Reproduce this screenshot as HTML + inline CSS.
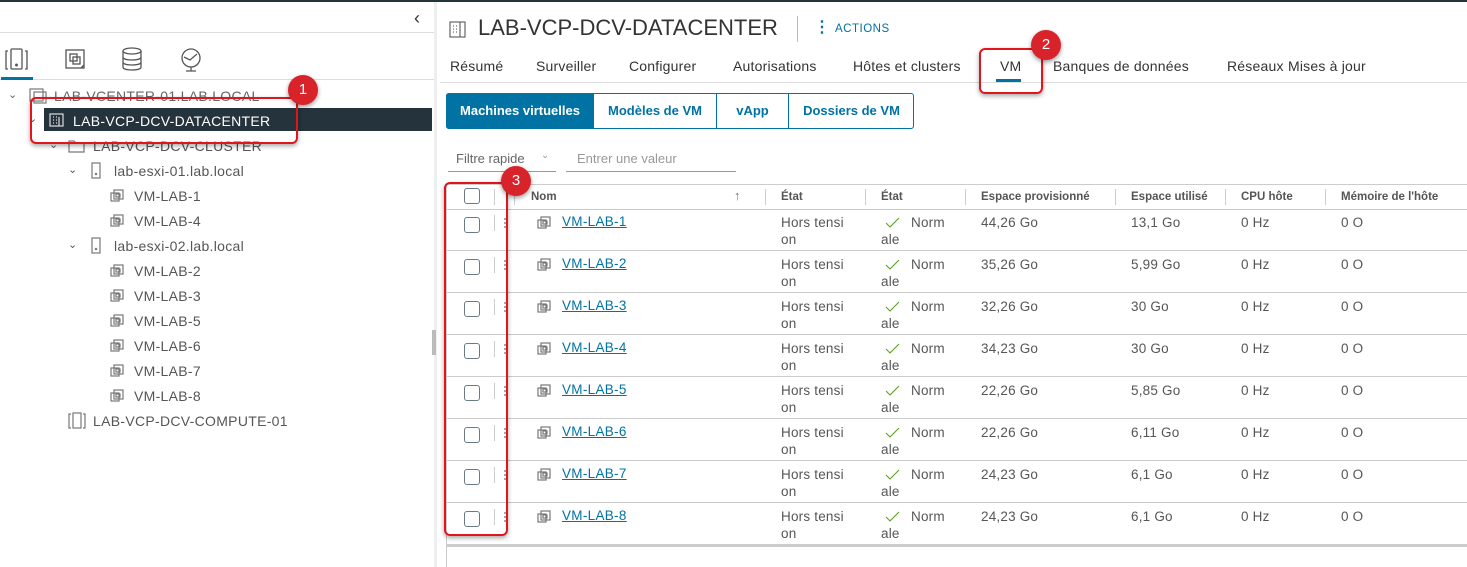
<!DOCTYPE html>
<html><head><meta charset="utf-8"><style>
*{margin:0;padding:0;box-sizing:border-box}
body{width:1467px;height:567px;overflow:hidden;background:#fff;font-family:"Liberation Sans",sans-serif;color:#565656;position:relative}
.a{position:absolute;white-space:nowrap}
.t{font-size:14px;color:#565656;letter-spacing:.3px}
.tab{font-size:14px;color:#333;top:58px;letter-spacing:.2px}
.hd{font-size:11.5px;font-weight:bold;color:#555;top:191px}
.cell{font-size:13.5px;color:#565656;line-height:17px;letter-spacing:.2px}
.cb{width:16px;height:16px;border:1px solid #6a7a86;border-radius:3px;background:#fff}
.vd{width:1px;height:16px;background:#ccc}
.link{color:#0072a3;text-decoration:underline;font-size:13.5px;letter-spacing:.3px}
.red{border:2px solid #e0161b;border-radius:6px;box-shadow:0 2px 5px rgba(0,0,0,.35)}
.badge{width:30px;height:30px;border-radius:50%;background:#d9232b;color:#fff;font-size:15px;text-align:center;line-height:30px;box-shadow:0 2px 5px rgba(0,0,0,.4)}
</style></head><body>
<div class="a" style="left:0;top:0;width:1467px;height:2px;background:#25333d"></div>
<!-- left panel -->
<div class="a" style="left:434px;top:2px;width:3px;height:565px;background:#eceeef"></div>
<div class="a" style="left:432px;top:330px;width:4px;height:25px;background:#bbb"></div>
<div class="a" style="left:414px;top:8px;font-size:18px;color:#333">&#8249;</div>
<div class="a" style="left:0;top:32px;width:434px;height:1px;background:#ddd"></div>
<div class="a" style="left:0;top:79px;width:434px;height:1px;background:#ddd"></div>
<div class="a" style="left:1px;top:77px;width:32px;height:3px;background:#0072a3"></div>
<svg class="a" style="left:0;top:45px" width="220" height="32" fill="none" stroke="#555" stroke-width="1.3">
<path d="M8 6h-2v18h2M25 6h2v18h-2"/><rect x="11" y="4" width="11" height="20" rx="1"/><circle cx="16.5" cy="20" r=".8" fill="#555"/>
<rect x="66" y="5" width="18" height="18"/><rect x="70" y="9" width="7" height="7"/><rect x="73" y="12" width="7" height="7"/><path d="M84 20l-3 3"/>
<ellipse cx="132" cy="6" rx="9" ry="3"/><path d="M123 6v16c0 2 4 3 9 3s9-1 9-3V6M123 12c0 2 4 3 9 3s9-1 9-3M123 17c0 2 4 3 9 3s9-1 9-3"/>
<circle cx="191" cy="13" r="9"/><path d="M184 12l6 3 7-6M186 26h10M191 22v4"/>
</svg>
<div class="a" style="left:44px;top:108px;width:388px;height:23px;background:#25333d"></div>
<div class="a t" style="left:8px;top:88px;font-size:11px;color:#666">&#8964;</div>
<svg class="a" style="left:28px;top:87px" width="20" height="18" fill="none" stroke="#777" stroke-width="1.2"><rect x="2" y="2" width="13" height="12"/><rect x="6" y="5" width="12" height="11"/></svg>
<div class="a t" style="left:54px;top:88px;color:#666">LAB-VCENTER-01.LAB.LOCAL</div>
<div class="a t" style="left:28px;top:112px;font-size:11px">&#8964;</div>
<svg class="a" style="left:49px;top:112px" width="16" height="16" fill="none" stroke="#ddd" stroke-width="1.2"><rect x="1" y="2" width="13" height="12"/><path d="M4 5h1M7 5h1M4 8h1M7 8h1M4 11h1M7 11h1M10 5v9"/></svg>
<div class="a t" style="left:73px;top:113px;color:#fff">LAB-VCP-DCV-DATACENTER</div>
<div class="a t" style="left:49px;top:138px;font-size:11px">&#8964;</div>
<svg class="a" style="left:68px;top:138px" width="18" height="16" fill="none" stroke="#777" stroke-width="1.2"><path d="M1 3h5l2 2h8v9H1z"/></svg>
<div class="a t" style="left:93px;top:138px">LAB-VCP-DCV-CLUSTER</div>
<div class="a t" style="left:68px;top:163px;font-size:11px">&#8964;</div>
<svg class="a" style="left:90px;top:162px" width="12" height="18" fill="none" stroke="#777" stroke-width="1.2"><rect x="2" y="1" width="8" height="15"/><circle cx="6" cy="12" r=".6" fill="#777"/></svg>
<div class="a t" style="left:114px;top:163px">lab-esxi-01.lab.local</div>
<div class="a t" style="left:68px;top:238px;font-size:11px">&#8964;</div>
<svg class="a" style="left:90px;top:237px" width="12" height="18" fill="none" stroke="#777" stroke-width="1.2"><rect x="2" y="1" width="8" height="15"/><circle cx="6" cy="12" r=".6" fill="#777"/></svg>
<div class="a t" style="left:114px;top:238px">lab-esxi-02.lab.local</div>
<svg width="0" height="0" style="position:absolute"><defs><g id="vm" fill="none" stroke="#777" stroke-width="1.2"><rect x="1" y="5" width="8" height="8"/><rect x="4" y="2" width="9" height="9"/><rect x="6" y="6" width="4" height="3"/></g></defs></svg>
<svg class="a" style="left:110px;top:188px" width="16" height="16"><use href="#vm"/></svg><div class="a t" style="left:134px;top:188px">VM-LAB-1</div>
<svg class="a" style="left:110px;top:213px" width="16" height="16"><use href="#vm"/></svg><div class="a t" style="left:134px;top:213px">VM-LAB-4</div>
<svg class="a" style="left:110px;top:263px" width="16" height="16"><use href="#vm"/></svg><div class="a t" style="left:134px;top:263px">VM-LAB-2</div>
<svg class="a" style="left:110px;top:288px" width="16" height="16"><use href="#vm"/></svg><div class="a t" style="left:134px;top:288px">VM-LAB-3</div>
<svg class="a" style="left:110px;top:313px" width="16" height="16"><use href="#vm"/></svg><div class="a t" style="left:134px;top:313px">VM-LAB-5</div>
<svg class="a" style="left:110px;top:338px" width="16" height="16"><use href="#vm"/></svg><div class="a t" style="left:134px;top:338px">VM-LAB-6</div>
<svg class="a" style="left:110px;top:363px" width="16" height="16"><use href="#vm"/></svg><div class="a t" style="left:134px;top:363px">VM-LAB-7</div>
<svg class="a" style="left:110px;top:388px" width="16" height="16"><use href="#vm"/></svg><div class="a t" style="left:134px;top:388px">VM-LAB-8</div>
<svg class="a" style="left:68px;top:412px" width="18" height="18" fill="none" stroke="#777" stroke-width="1.2"><path d="M3 2H1v14h2M15 2h2v14h-2"/><rect x="5" y="1" width="8" height="15"/></svg>
<div class="a t" style="left:93px;top:413px">LAB-VCP-DCV-COMPUTE-01</div>

<!-- right -->
<svg class="a" style="left:449px;top:20px" width="18" height="18" fill="none" stroke="#666" stroke-width="1.2"><rect x="1" y="2" width="15" height="15"/><path d="M4 6h1M7 6h1M4 9h1M7 9h1M4 12h1M7 12h1M11 2v15"/></svg>
<div class="a" style="left:478px;top:15px;font-size:22px;color:#333">LAB-VCP-DCV-DATACENTER</div>
<div class="a" style="left:797px;top:16px;width:1px;height:26px;background:#bbb"></div>
<div class="a" style="left:814px;top:17px;font-size:16px;font-weight:bold;color:#0072a3">&#8942;</div>
<div class="a" style="left:835px;top:23px;font-size:11.5px;color:#0072a3;letter-spacing:.5px">ACTIONS</div>
<div class="a tab" style="left:450px">Résumé</div>
<div class="a tab" style="left:536px">Surveiller</div>
<div class="a tab" style="left:629px">Configurer</div>
<div class="a tab" style="left:733px">Autorisations</div>
<div class="a tab" style="left:853px">Hôtes et clusters</div>
<div class="a tab" style="left:1000px">VM</div>
<div class="a tab" style="left:1053px">Banques de données</div>
<div class="a tab" style="left:1227px">Réseaux</div>
<div class="a tab" style="left:1288px">Mises à jour</div>
<div class="a" style="left:440px;top:82px;width:1027px;height:1px;background:#ddd"></div>
<div class="a" style="left:996px;top:79px;width:25px;height:3px;background:#0072a3"></div>

<div class="a" style="left:446px;top:93px;width:468px;height:36px;border:1px solid #0072a3;border-radius:3px"></div>
<div class="a" style="left:446px;top:93px;width:148px;height:36px;background:#0072a3;border-radius:3px 0 0 3px;color:#fff;font-size:13px;font-weight:bold;line-height:36px;text-align:center">Machines virtuelles</div>
<div class="a" style="left:594px;top:93px;width:123px;height:36px;color:#0072a3;font-size:13px;font-weight:bold;line-height:36px;text-align:center;border-right:1px solid #0072a3">Modèles de VM</div>
<div class="a" style="left:717px;top:93px;width:72px;height:36px;color:#0072a3;font-size:13px;font-weight:bold;line-height:36px;text-align:center;border-right:1px solid #0072a3">vApp</div>
<div class="a" style="left:789px;top:93px;width:125px;height:36px;color:#0072a3;font-size:13px;font-weight:bold;line-height:36px;text-align:center">Dossiers de VM</div>

<div class="a" style="left:456px;top:151px;font-size:13px;color:#666">Filtre rapide</div>
<div class="a" style="left:541px;top:150px;font-size:10px;color:#999">&#8964;</div>
<div class="a" style="left:448px;top:171px;width:108px;height:1px;background:#999"></div>
<div class="a" style="left:577px;top:151px;font-size:13px;color:#999">Entrer une valeur</div>
<div class="a" style="left:566px;top:171px;width:170px;height:1px;background:#999"></div>

<!-- table -->
<div class="a" style="left:446px;top:184px;width:1021px;height:1px;background:#ccc"></div>
<div class="a" style="left:446px;top:184px;width:1px;height:383px;background:#ccc"></div>
<div class="a" style="left:446px;top:209px;width:1021px;height:1px;background:#ccc"></div>
<div class="a cb" style="left:464px;top:188px"></div>
<div class="a vd" style="left:494px;top:189px"></div>
<div class="a vd" style="left:514px;top:189px"></div>
<div class="a hd" style="left:531px">Nom</div>
<div class="a" style="left:734px;top:188px;font-size:13px;color:#777">&#8593;</div>
<div class="a vd" style="left:765px;top:189px"></div>
<div class="a hd" style="left:781px">État</div>
<div class="a vd" style="left:865px;top:189px"></div>
<div class="a hd" style="left:881px">État</div>
<div class="a vd" style="left:965px;top:189px"></div>
<div class="a hd" style="left:981px">Espace provisionné</div>
<div class="a vd" style="left:1115px;top:189px"></div>
<div class="a hd" style="left:1131px">Espace utilisé</div>
<div class="a vd" style="left:1225px;top:189px"></div>
<div class="a hd" style="left:1241px">CPU hôte</div>
<div class="a vd" style="left:1325px;top:189px"></div>
<div class="a hd" style="left:1341px">Mémoire de l'hôte</div>

<div id="rows"></div>
<script>
var d=[["1","44,26","13,1"],["2","35,26","5,99"],["3","32,26","30"],["4","34,23","30"],["5","22,26","5,85"],["6","22,26","6,11"],["7","24,23","6,1"],["8","24,23","6,1"]];
var h="";
d.forEach(function(r,i){var y=209+i*42;
h+='<div class="a cb" style="left:464px;top:'+(y+8)+'px"></div>';
h+='<div class="a vd" style="left:494px;top:'+(y+6)+'px"></div>';
h+='<svg class="a" style="left:503px;top:'+(y+8)+'px" width="4" height="14" fill="#888"><circle cx="2" cy="2" r="1"/><circle cx="2" cy="6" r="1"/><circle cx="2" cy="10" r="1"/></svg>';
h+='<svg class="a" style="left:537px;top:'+(y+6)+'px" width="16" height="16"><use href="#vm"/></svg>';
h+='<div class="a link" style="left:562px;top:'+(y+5)+'px">VM-LAB-'+r[0]+'</div>';
h+='<div class="a cell" style="left:781px;top:'+(y+5)+'px">Hors tensi<br>on</div>';
h+='<svg class="a" style="left:885px;top:'+(y+8)+'px" width="16" height="12" fill="none" stroke="#5aa220" stroke-width="1.1"><path d="M1 6l4 4 9-9"/></svg>';
h+='<div class="a cell" style="left:881px;top:'+(y+5)+'px"><span style="margin-left:30px">Norm</span><br>ale</div>';
h+='<div class="a cell" style="left:981px;top:'+(y+5)+'px">'+r[1]+' Go</div>';
h+='<div class="a cell" style="left:1131px;top:'+(y+5)+'px">'+r[2]+' Go</div>';
h+='<div class="a cell" style="left:1241px;top:'+(y+5)+'px">0 Hz</div>';
h+='<div class="a cell" style="left:1341px;top:'+(y+5)+'px">0 O</div>';
h+='<div class="a" style="left:446px;top:'+(y+41)+'px;width:1021px;height:1px;background:#ccc"></div>';
});
document.getElementById("rows").innerHTML=h;
</script>
<div class="a" style="left:446px;top:545px;width:1021px;height:2px;background:#ccc"></div>

<!-- annotations -->
<div class="a red" style="left:30px;top:97px;width:268px;height:47px"></div>
<div class="a badge" style="left:288px;top:75px">1</div>
<div class="a red" style="left:979px;top:48px;width:64px;height:46px"></div>
<div class="a badge" style="left:1031px;top:30px">2</div>
<div class="a red" style="left:444px;top:182px;width:64px;height:354px"></div>
<div class="a badge" style="left:501px;top:166px">3</div>
</body></html>
